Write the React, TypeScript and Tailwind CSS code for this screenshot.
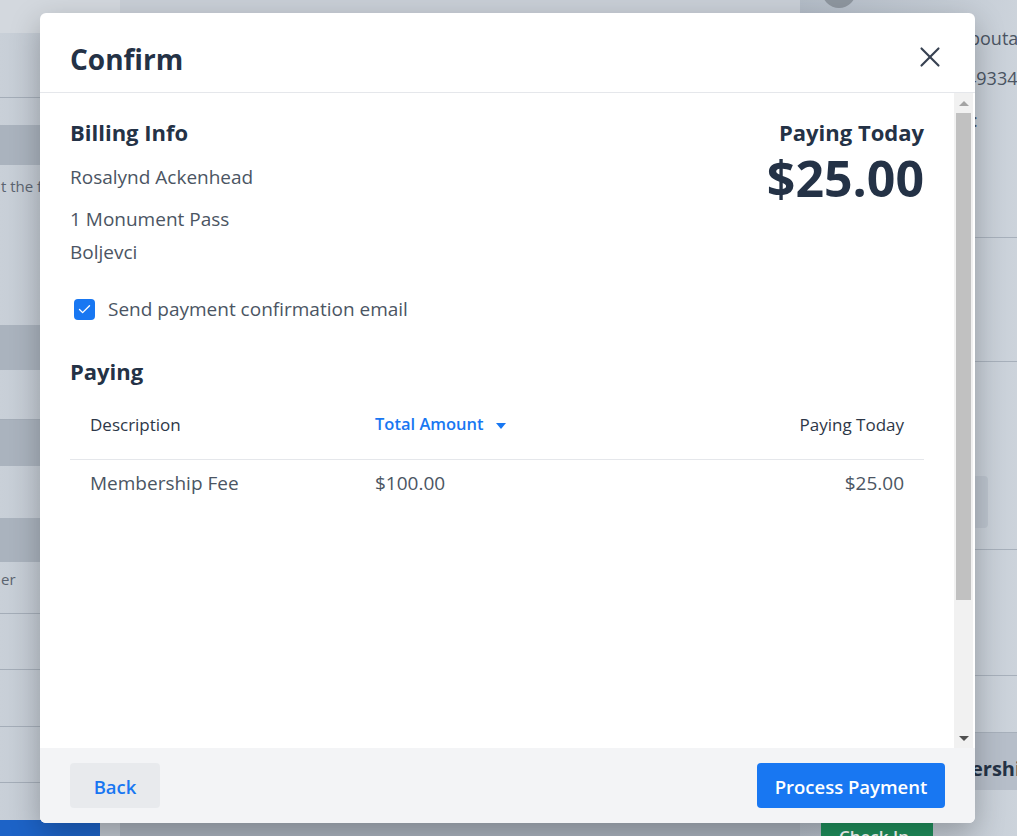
import React from 'react';
import { X, Check } from 'lucide-react';

const font = { fontFamily: '"Open Sans", "Noto Sans", sans-serif' };

// Dimmed page behind the dialog
const Backdrop: React.FC = () => (
  <div className="absolute inset-0 flex bg-[#b4bcc7]">
    {/* left column */}
    <div className="w-[120px] flex flex-col bg-gradient-to-r from-[#c9d0d8] to-[#b9c1cc] [&>*]:shrink-0">
      <div className="h-[33px] bg-[#d3d8de]" />
      <div className="h-[65px] border-b border-[#a4adb8]" />
      <div className="h-[27px]" />
      <div className="h-[40px] bg-[#aab3be]" />
      <div className="h-[45px] text-[15px] text-[#5b6470] whitespace-nowrap pt-[10px] pl-[1px]">t the f</div>
      <div className="h-[115px]" />
      <div className="h-[45px] bg-[#aab3be]" />
      <div className="h-[50px] border-b border-[#a4adb8]" />
      <div className="h-[46px] bg-[#aab3be]" />
      <div className="h-[52px]" />
      <div className="h-[44px] bg-[#aab3be]" />
      <div className="h-[52px] text-[15px] text-[#5b6470] pt-[6px] pl-[1px] border-b border-[#a4adb8]">er</div>
      <div className="h-[56px] border-b border-[#a4adb8]" />
      <div className="h-[57px] border-b border-[#a4adb8]" />
      <div className="h-[56px] border-b border-[#a4adb8]" />
      <div className="h-[53px] flex">
        <div className="w-[100px] mt-[37px] bg-[#1d63c7]" />
        <div className="flex-1 bg-[#bfc6cf]" />
      </div>
    </div>
    {/* middle */}
    <div className="flex-1 flex flex-col">
      <div className="h-[40px] bg-[#c9cfd7]" />
      <div className="flex-1 bg-[#a9b1bc]" />
    </div>
    {/* right column */}
    <div className="w-[217px] flex flex-col bg-gradient-to-r from-[#b3bcc7] to-[#ccd3db] text-[#4b5563] [&>*]:shrink-0" style={font}>
      <div className="h-[25px] pl-[22px] flex items-start">
        <div className="w-[34px] h-[34px] rounded-full bg-[#8e969f] -mt-[26px]" />
      </div>
      <div className="h-[40px] text-[18px] pl-[169px] whitespace-nowrap overflow-hidden">bouta</div>
      <div className="h-[42px] text-[18px] pl-[166px] whitespace-nowrap overflow-hidden">493349</div>
      <div className="h-[130px] text-[18px] pl-[173px]">:</div>
      <div className="h-[124px] border-t border-[#a7b0bb]" />
      <div className="h-[188px] border-t border-[#a7b0bb] pt-[114px] pl-[160px]">
        <div className="w-[28px] h-[52px] rounded-[4px] bg-[#bcc4ce]" />
      </div>
      <div className="h-[126px] border-t border-[#a7b0bb]" />
      <div className="h-[57px] border-t border-[#a7b0bb]" />
      <div className="h-[58px] border-t border-[#a7b0bb] bg-[#b6bec9] text-[20px] font-bold text-[#243246] pl-[171px] pt-[23px] whitespace-nowrap overflow-hidden leading-[26px]">ershi</div>
      <div className="h-[46px] pl-[21px] pt-[31px] overflow-hidden">
        <div className="w-[112px] h-[30px] bg-[#1f8f5c] text-white text-[17px] font-semibold pl-[18px] pt-[4px] leading-[24px]">Check In</div>
      </div>
    </div>
  </div>
);

const Scrollbar: React.FC = () => (
  <div className="w-[19px] mr-[2px] flex flex-col bg-[#f1f1f1]">
    <div className="h-[20px] flex items-center justify-center">
      <div className="w-0 h-0 border-l-[5px] border-r-[5px] border-b-[5px] border-l-transparent border-r-transparent border-b-[#a3a3a3]" />
    </div>
    <div className="h-[487px] mx-[2px] bg-[#c1c1c1]" />
    <div className="flex-1" />
    <div className="h-[20px] flex items-center justify-center">
      <div className="w-0 h-0 border-l-[5px] border-r-[5px] border-t-[5px] border-l-transparent border-r-transparent border-t-[#505050]" />
    </div>
  </div>
);

export default function App() {
  return (
    <div className="relative w-[1017px] h-[836px] overflow-hidden" style={font}>
      <Backdrop />

      {/* dialog */}
      <div className="absolute left-[40px] top-[13px] w-[935px] h-[810px] flex flex-col bg-white rounded-[6px] shadow-[0_10px_30px_rgba(0,0,0,0.25)] overflow-hidden">
        <div className="h-[80px] flex items-center justify-between pl-[30px] pr-[28px] border-b border-[#e5e7eb] shrink-0">
          <h1 className="text-[28px] font-bold text-[#243246] mt-[12px]">Confirm</h1>
          <X className="w-[34px] h-[34px] text-[#374151] mt-[8px]" strokeWidth={1.5} />
        </div>

        <div className="flex-1 flex min-h-0">
          <div className="flex-1 pl-[30px] pr-[30px] pt-[24px]">
            <div className="flex justify-between">
              <div>
                <h2 className="text-[22px] font-bold text-[#243246] leading-[30px]">Billing Info</h2>
                <div className="mt-[15px] text-[19px] text-[#4b5563] leading-[30px]">Rosalynd Ackenhead</div>
                <div className="mt-[12px] text-[19px] text-[#4b5563] leading-[30px]">1 Monument Pass</div>
                <div className="mt-[3px] text-[19px] text-[#4b5563] leading-[30px]">Boljevci</div>
              </div>
              <div className="text-right">
                <div className="text-[22px] font-bold text-[#243246] leading-[30px]">Paying Today</div>
                <div className="text-[50px] font-bold text-[#243246] leading-[56px] mt-[3px]">$25.00</div>
              </div>
            </div>

            <label className="mt-[28px] flex items-center gap-[13px] pl-[4px]">
              <span className="w-[21px] h-[21px] rounded-[4px] bg-[#1877f2] flex items-center justify-center">
                <Check className="w-[15px] h-[15px] text-white" strokeWidth={2.2} />
              </span>
              <span className="text-[19px] text-[#4b5563]">Send payment confirmation email</span>
            </label>

            <h2 className="mt-[32px] text-[22px] font-bold text-[#243246] leading-[30px]">Paying</h2>

            <table className="mt-[4px] w-full text-[17px]">
              <thead>
                <tr className="border-b border-[#e5e7eb]">
                  <th className="text-left font-normal text-[#2d3748] pl-[20px] h-[70px] w-[305px]">Description</th>
                  <th className="text-left font-semibold text-[#1877f2] text-[16.5px]">
                    <span className="inline-flex items-center gap-[12px]">
                      Total Amount
                      <span className="w-0 h-0 mt-[3px] border-l-[5px] border-r-[5px] border-t-[6px] border-l-transparent border-r-transparent border-t-[#1877f2]" />
                    </span>
                  </th>
                  <th className="text-right font-normal text-[#2d3748] pr-[20px]">Paying Today</th>
                </tr>
              </thead>
              <tbody>
                <tr className="text-[19px] text-[#4b5563]">
                  <td className="pl-[20px] h-[47px]">Membership Fee</td>
                  <td>$100.00</td>
                  <td className="text-right pr-[20px]">$25.00</td>
                </tr>
              </tbody>
            </table>
          </div>
          <Scrollbar />
        </div>

        <div className="h-[75px] shrink-0 bg-[#f3f4f6] flex items-center justify-between px-[30px]">
          <button className="h-[45px] w-[90px] pt-[3px] rounded-[4px] bg-[#e8eaed] text-[#1877f2] text-[18.5px] font-semibold">Back</button>
          <button className="h-[45px] w-[188px] pt-[3px] rounded-[4px] bg-[#1877f2] text-white text-[18.5px] font-semibold">Process Payment</button>
        </div>
      </div>
    </div>
  );
}
